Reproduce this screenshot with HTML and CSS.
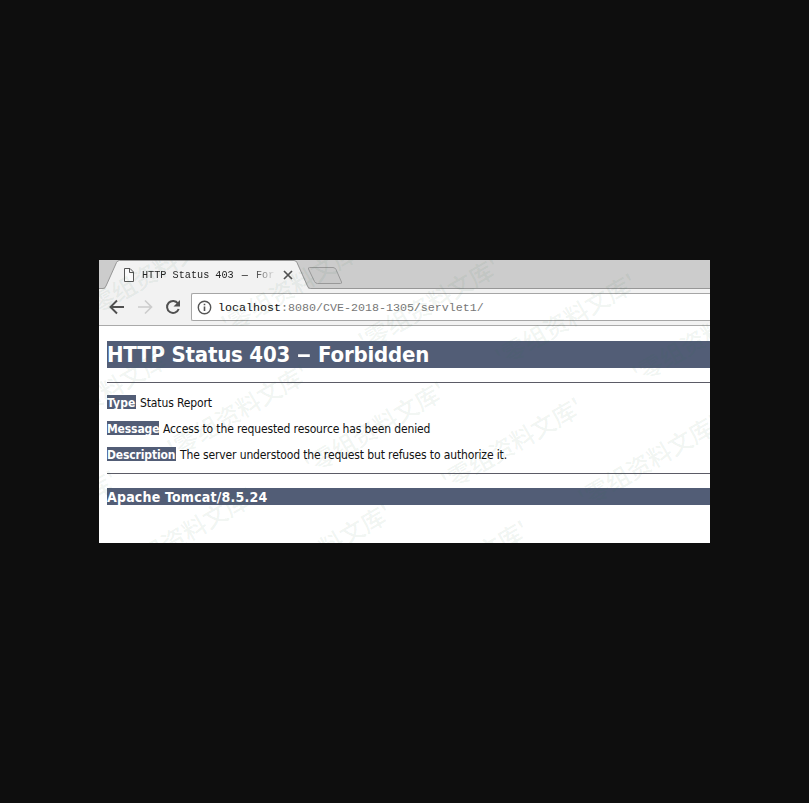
FILE: index.html
```html
<!DOCTYPE html>
<html lang="en">
<head>
<meta charset="utf-8">
<title>HTTP Status 403 – Forbidden</title>
<link rel="stylesheet" href="styles.css">
</head>
<body>
<main class="window">
  <header class="tabs">
    <svg class="tab-shapes" width="611" height="30" viewBox="0 0 611 30">
      <path d="M0 29.500H5.500L17.500 2.500Q18.500 .5 20.500 .5H194.500Q196.500 .5 197.500 2.500L209.500 29.500V30H0Z" fill="#f2f2f2"/>
      <path d="M0 0H18L5.500 28H0Z" fill="#ccc"/>
      <path d="M0 28.500H4Q6 28.500 7 26L17.500 2.500Q18.500 .5 20.500 .5H195Q197 .5 198 2.500L208.500 26Q209.500 28.500 211.500 28.500H611" fill="none" stroke="#979797"/>
      <path d="M210.500 7.500H234Q236 7.500 237 9.500L242.500 22Q243 23.500 241.500 23.500H218.500Q216.500 23.500 215.500 21.500L209.500 9Q209 7.500 210.500 7.500Z" fill="#c8c8c8" stroke="#999"/>
      <path d="M25.500 8.500H31L34.500 12V21.500H25.500ZM30.500 8.500V12.500H34.500" fill="#fafafa" stroke="#555"/>
      <path d="M185 11L193 19M193 11L185 19" stroke="#505050" stroke-width="1.700"/>
    </svg>
    <div class="tab-title">HTTP Status 403 <span class="dash">—</span> For</div>
  </header>
  <nav class="toolbar">
    <svg class="nav-icons" width="92" height="36" viewBox="0 0 92 36" fill="none">
      <path d="M25 18H12M18 11.500L11.500 18L18 24.500" stroke="#505050" stroke-width="1.900"/>
      <path d="M39 18H52M46 11.500L52.500 18L46 24.500" stroke="#ccc" stroke-width="1.700"/>
      <path d="M79 14.500A6 6 0 1 0 79.700 20" stroke="#505050" stroke-width="2"/>
      <path d="M81 11V17.500H74.500Z" fill="#505050"/>
    </svg>
    <div class="address">
      <svg width="15" height="15" viewBox="0 0 15 15" fill="none" stroke="#555">
        <circle cx="7.500" cy="7.500" r="6.200" stroke-width="1.400"/>
        <path d="M7.500 6.500V11M7.500 3.700V5.300" stroke-width="1.600"/>
      </svg>
      <span class="url"><b>localhost</b>:8080/CVE-2018-1305/servlet1/</span>
    </div>
  </nav>
  <section class="page">
    <h1><span>HTTP Status 403</span><span class="rule">–</span><span>Forbidden</span></h1>
    <hr>
    <p><b class="type">Type</b><span class="status">Status Report</span></p>
    <p><b class="message">Message</b><span>Access to the requested resource has been denied</span></p>
    <p><b class="description">Description</b><span>The server understood the request but refuses to authorize it.</span></p>
    <hr class="second">
    <h3>Apache Tomcat/8.5.24</h3>
  </section>
  <svg class="watermark" width="611" height="283" viewBox="99 260 611 283">
    <g text-anchor="middle">
      <text transform="translate(155 271) rotate(-30)" y="9">'零组资料文库'</text>
      <text transform="translate(292 287) rotate(-30)" y="9">'零组资料文库'</text>
      <text transform="translate(429 304) rotate(-30)" y="9">'零组资料文库'</text>
      <text transform="translate(566 320) rotate(-30)" y="9">'零组资料文库'</text>
      <text transform="translate(703 337) rotate(-30)" y="9">'零组资料文库'</text>
      <text transform="translate(101 394) rotate(-30)" y="9">'零组资料文库'</text>
      <text transform="translate(238 411) rotate(-30)" y="9">'零组资料文库'</text>
      <text transform="translate(375 428) rotate(-30)" y="9">'零组资料文库'</text>
      <text transform="translate(512 444) rotate(-30)" y="9">'零组资料文库'</text>
      <text transform="translate(649 461) rotate(-30)" y="9">'零组资料文库'</text>
      <text transform="translate(47 517) rotate(-30)" y="9">'零组资料文库'</text>
      <text transform="translate(184 534) rotate(-30)" y="9">'零组资料文库'</text>
      <text transform="translate(321 550) rotate(-30)" y="9">'零组资料文库'</text>
      <text transform="translate(458 567) rotate(-30)" y="9">'零组资料文库'</text>
    </g>
  </svg>
</main>
</body>
</html>
```
FILE: styles.css
```css
* { box-sizing: border-box; }
body {
  margin: 0;
  height: 803px;
  padding: 260px 99px;
  background: #0e0e0e;
  overflow: hidden;
}
.window {
  position: relative;
  width: 611px;
  height: 283px;
  overflow: hidden;
  background: #fff;
  font-family: "DejaVu Sans Condensed", "DejaVu Sans", sans-serif;
}
.tabs {
  position: relative;
  height: 29px;
  padding: 9px 0 0 43px;
  background: #ccc;
}
.tab-shapes { position: absolute; left: 0; top: 0; }
.tab-title {
  position: relative;
  width: 132px;
  font: 10.2px/14px "Liberation Mono", monospace;
  white-space: pre;
  overflow: hidden;
  color: #222;
  -webkit-mask-image: linear-gradient(90deg, #000 110px, transparent 134px);
  mask-image: linear-gradient(90deg, #000 110px, transparent 134px);
}
.dash { display: inline-block; width: 10px; text-align: center; }
.toolbar {
  display: flex;
  height: 37px;
  background: #f2f2f2;
  border-bottom: 1px solid #aaa;
}
.nav-icons { flex: none; }
.address {
  display: flex;
  align-items: center;
  gap: 6px;
  flex: 1;
  height: 28px;
  margin-top: 4px;
  padding-left: 5px;
  border: 1px solid #a6a6a6;
  border-right: 0;
  border-radius: 2px 0 0 2px;
  background: #fff;
}
.url { font: 11.67px/16px "Liberation Mono", monospace; color: #777; padding-top: 2px; }
.url b { font-weight: 400; color: #111; }
.page { padding: 15px 0 0 8px; color: #111; }
h1, h3 { margin: 0; color: #fff; background: #525d76; font-weight: 700; white-space: nowrap; }
h1 { display: flex; height: 27px; font-size: 22px; line-height: 28px; letter-spacing: -.2px; }
.rule { width: 10px; margin: 0 9px; transform: scaleX(1.5); }
h3 { height: 17px; font-size: 14px; line-height: 18px; letter-spacing: .2px; }
hr { height: 1px; margin: 14px 0 12px; border: 0; background: #5b5b66; }
p {
  display: flex;
  gap: 4px;
  height: 15px;
  margin: 0 0 11px;
  font-size: 12px;
  line-height: 17px;
  letter-spacing: -.13px;
  white-space: nowrap;
}
p b { height: 14px; line-height: 16px; color: #fff; background: #525d76; }
.type { width: 29px; letter-spacing: .1px; }
.message { width: 52px; }
.description { width: 69px; }
hr.second { margin: 0 0 14px; }
.watermark { position: absolute; left: 0; top: 0; pointer-events: none; }
.watermark text {
  font: 500 24px "Noto Sans CJK SC", sans-serif;
  fill: #307048;
  fill-opacity: .08;
}
```
